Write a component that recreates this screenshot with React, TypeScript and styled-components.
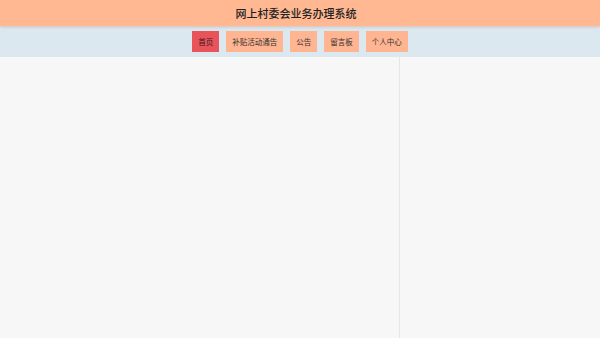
import styled, { createGlobalStyle, css } from 'styled-components'

const GlobalStyle = createGlobalStyle`
  html, body {
    margin: 0;
    padding: 0;
    height: 100%;
    background: #f7f7f7;
    font-family: "Noto Sans CJK SC", "Noto Sans", sans-serif;
  }
  #root {
    height: 100%;
  }
`

interface NavProps {
  active?: boolean
}

const Page = styled.div`
  display: flex;
  flex-direction: column;
  height: 338px;
  overflow: hidden;
`

const Header = styled.header`
  align-items: center;
  background: #ffb892;
  box-shadow: 0 1px 3px rgba(180, 120, 90, 0.35);
  display: flex;
  height: 26px;
  justify-content: center;
  position: relative;
  z-index: 1;
`

const Title = styled.h1`
  color: #222;
  font-size: 11px;
  font-weight: 500;
  margin: 0 8px 1px 0;
`

const NavBar = styled.nav`
  align-items: center;
  background: #dce8f0;
  display: flex;
  gap: 7px;
  height: 31px;
  justify-content: center;
`

const NavButton = styled.div`
  align-items: center;
  background: #ffb592;
  border-left: 2px dotted #ffb592;
  border-right: 2px dotted #ffb592;
  color: #333;
  display: flex;
  font-size: 7.5px;
  height: 21px;
  padding: 0 4px;
  ${(props: NavProps) =>
    props.active === true &&
    css`
      background: #e8545a;
      border-color: #e8545a;
      color: #3a1a1a;
    `}
`

const Body = styled.main`
  display: flex;
  flex: 1;
`

const Content = styled.section`
  border-right: 1px solid #e6e6e6;
  width: 399px;
`

const Side = styled.aside`
  flex: 1;
`

const items = ['首页', '补贴活动通告', '公告', '留言板', '个人中心']

export default function App () {
  return (
    <Page>
      <GlobalStyle />
      <Header>
        <Title>网上村委会业务办理系统</Title>
      </Header>
      <NavBar>
        {items.map((item, i) => (
          <NavButton key={item} active={i === 0}>
            {item}
          </NavButton>
        ))}
      </NavBar>
      <Body>
        <Content />
        <Side />
      </Body>
    </Page>
  )
}
